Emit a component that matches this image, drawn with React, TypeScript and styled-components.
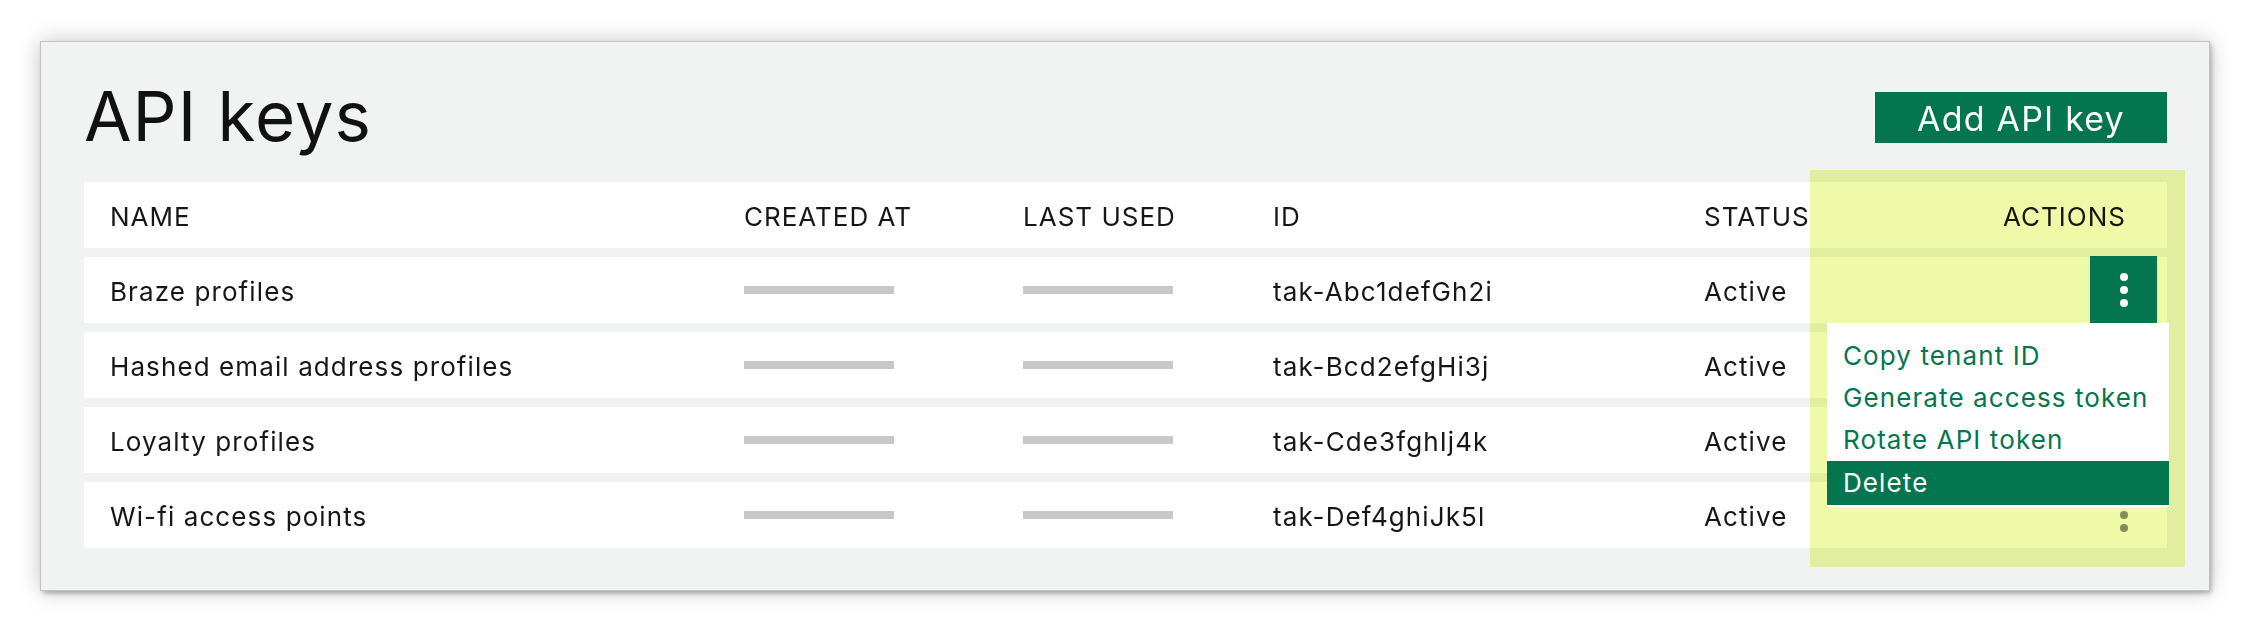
import React from "react";
import styled, { createGlobalStyle } from "styled-components";

const GREEN = "#03764f";

const Global = createGlobalStyle`
  html, body { margin: 0; padding: 0; background: #ffffff; }
  body { font-family: Inter, "Noto Sans", sans-serif; color: #161616; }
  * { box-sizing: border-box; }
`;

const Page = styled.div`
  padding: 42px 42px 42px 41px;
`;

const Panel = styled.section`
  position: relative;
  background: #f1f3f2;
  padding: 24px 42px 42px 43px;
  box-shadow: 0 0 0 1px #c2c2c2, 2px 3px 5px rgba(0, 0, 0, 0.3),
    0 0 22px rgba(0, 0, 0, 0.25);
`;

const TitleBar = styled.header`
  height: 100px;
  margin-bottom: 16px;
  display: flex;
  align-items: center;
  justify-content: space-between;
`;

const Title = styled.h1`
  margin: 0;
  font-size: 69px;
  line-height: 1;
  font-weight: 400;
  letter-spacing: 1px;
  color: #111;
`;

const PrimaryButton = styled.button`
  width: 292px;
  height: 51px;
  border: 0;
  background: ${GREEN};
  color: #fff;
  font-family: inherit;
  font-size: 34px;
  line-height: 1;
  letter-spacing: 1.2px;
  padding: 2px 0 0;
  margin-top: 3px;
`;

const Table = styled.div`
  display: flex;
  flex-direction: column;
  gap: 9px;
`;

const Row = styled.div<{ $head?: boolean }>`
  height: 66px;
  background: #fff;
  display: grid;
  grid-template-columns: 634px 279px 250px 431px 1fr auto;
  align-items: center;
  padding: ${(p) => (p.$head ? "0 41px 0 26px" : "0 10px 0 26px")};
  font-size: 26px;
  letter-spacing: ${(p) => (p.$head ? "1px" : "1.1px")};
  line-height: 1;
`;

const Cell = styled.div`
  padding-top: 3px;
  white-space: nowrap;
`;

const Placeholder = styled.div`
  width: 150px;
  height: 8px;
  background: #c8c8c8;
`;

const ActionCell = styled.div`
  position: relative;
  height: 66px;
  display: flex;
  justify-content: flex-end;
`;

const Kebab = styled.button<{ $open?: boolean }>`
  position: relative;
  z-index: ${(p) => (p.$open ? 2 : "auto")};
  width: 67px;
  height: 67px;
  margin-top: -1px;
  border: 0;
  padding: 0;
  background: ${(p) => (p.$open ? GREEN : "transparent")};
  color: ${(p) => (p.$open ? "#fff" : "#8a8f86")};
  display: flex;
  align-items: center;
  justify-content: center;
`;

const Menu = styled.ul`
  position: absolute;
  z-index: 2;
  top: 100%;
  right: -12px;
  width: 342px;
  margin: 0;
  padding: 12px 0 2px;
  list-style: none;
  background: #fff;
`;

const MenuItem = styled.li<{ $active?: boolean }>`
  height: ${(p) => (p.$active ? "44px" : "42px")};
  line-height: ${(p) => (p.$active ? "44px" : "42px")};
  padding-left: 16px;
  font-size: 26px;
  letter-spacing: 1.1px;
  color: ${(p) => (p.$active ? "#fff" : GREEN)};
  background: ${(p) => (p.$active ? GREEN : "transparent")};
  white-space: nowrap;
`;

const Highlight = styled.div`
  position: absolute;
  z-index: 1;
  left: 1769px;
  top: 128px;
  width: 375px;
  height: 397px;
  background: #eefaa8;
  mix-blend-mode: multiply;
  pointer-events: none;
`;

const Dots = () => (
  <svg width="8" height="34" viewBox="0 0 8 34" aria-hidden>
    <circle cx="4" cy="4" r="4" fill="currentColor" />
    <circle cx="4" cy="17" r="4" fill="currentColor" />
    <circle cx="4" cy="30" r="4" fill="currentColor" />
  </svg>
);

const keys = [
  { name: "Braze profiles", id: "tak-Abc1defGh2i" },
  { name: "Hashed email address profiles", id: "tak-Bcd2efgHi3j" },
  { name: "Loyalty profiles", id: "tak-Cde3fghIj4k" },
  { name: "Wi-fi access points", id: "tak-Def4ghiJk5l" },
];

const menuItems = [
  "Copy tenant ID",
  "Generate access token",
  "Rotate API token",
  "Delete",
];

export default function App() {
  return (
    <>
      <Global />
      <Page>
        <Panel>
          <TitleBar>
            <Title>API keys</Title>
            <PrimaryButton>Add API key</PrimaryButton>
          </TitleBar>
          <Table>
            <Row $head>
              <Cell>NAME</Cell>
              <Cell>CREATED AT</Cell>
              <Cell>LAST USED</Cell>
              <Cell>ID</Cell>
              <Cell>STATUS</Cell>
              <Cell>ACTIONS</Cell>
            </Row>
            {keys.map((k, i) => (
              <Row key={k.id}>
                <Cell>{k.name}</Cell>
                <Placeholder />
                <Placeholder />
                <Cell>{k.id}</Cell>
                <Cell>Active</Cell>
                <ActionCell>
                  <Kebab $open={i === 0}>
                    <Dots />
                  </Kebab>
                  {i === 0 && (
                    <Menu>
                      {menuItems.map((m) => (
                        <MenuItem key={m} $active={m === "Delete"}>
                          {m}
                        </MenuItem>
                      ))}
                    </Menu>
                  )}
                </ActionCell>
              </Row>
            ))}
          </Table>
          <Highlight />
        </Panel>
      </Page>
    </>
  );
}
